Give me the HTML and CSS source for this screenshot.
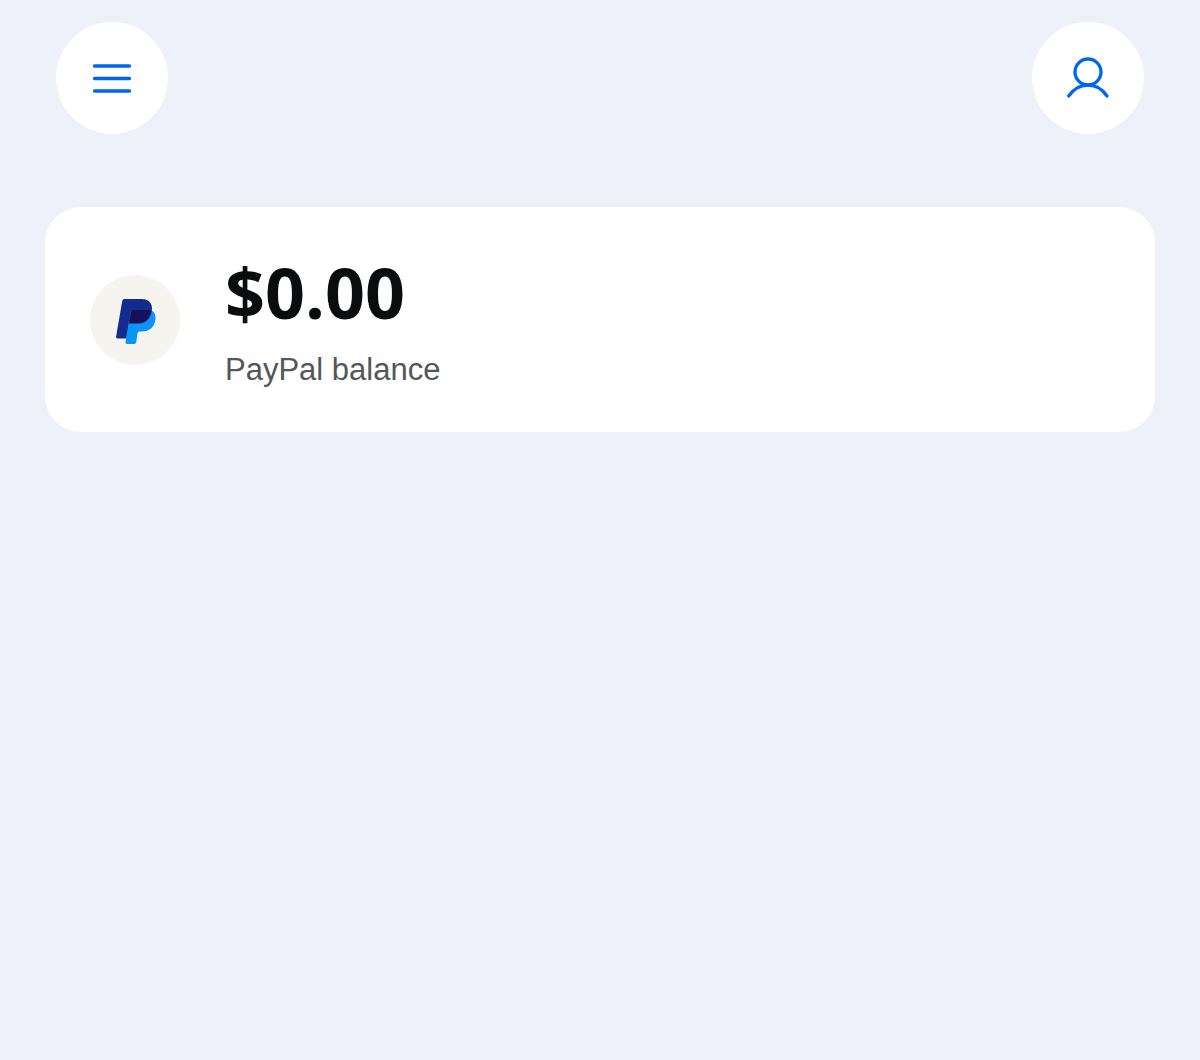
FILE: index.html
```html
<!DOCTYPE html>
<html lang="en">
<head>
  <meta charset="utf-8">
  <meta name="viewport" content="width=device-width, initial-scale=1">
  <title>PayPal balance</title>
  <link rel="stylesheet" href="styles.css">
</head>
<body>
  <header class="topbar">
    <button class="round-button" type="button" aria-label="Menu">
      <svg class="button-icon" viewBox="0 0 112 112" aria-hidden="true">
        <path d="M38.500 44H73.500M38.500 56.500H73.500M38.500 69H73.500"/>
      </svg>
    </button>
    <button class="round-button" type="button" aria-label="Profile">
      <svg class="button-icon" viewBox="0 0 112 112" aria-hidden="true">
        <circle cx="56" cy="50" r="13"/>
        <path d="M36.700 74C46.500 59.500 65.500 59.500 75 74"/>
      </svg>
    </button>
  </header>
  <main class="content">
    <section class="card">
      <svg class="logo" viewBox="0 0 90 90" role="img" aria-label="PayPal">
        <circle cx="45" cy="45" r="45" fill="#f6f4ef"/>
        <path fill="#122b8e" d="M34.500 24H52C58.500 24 62.500 28.500 62 34.500L50 47L38 63.500H27.500Q25.800 63.500 26.100 61.800L32.200 26Q32.500 24 34.500 24Z"/>
        <path fill="#0b94fb" d="M61.600 35.500C65 37.500 66 40.500 65.400 44.500C64.300 52.500 59.500 56.500 51.500 56.500H49.500Q47.800 56.500 47.500 58.200L46.200 67.300Q45.900 69 44.200 69H37Q35.300 69 35.500 67.300L38.700 47L50 40Z"/>
        <path fill="#11145c" stroke="#34408c" stroke-width=".6" d="M43 34.300H60Q61.800 34.300 61.600 36C60.500 43.500 56 48.500 48 48.500H38.800L41 36Q41.300 34.300 43 34.300Z"/>
      </svg>
      <div class="details">
        <p class="amount">$0.00</p>
        <p class="label">PayPal balance</p>
      </div>
    </section>
  </main>
</body>
</html>
```
FILE: styles.css
```css
* {
  box-sizing: border-box;
}

body {
  margin: 0;
  min-height: 100vh;
  background: #eef1f9;
  font-family: "Liberation Sans", Arial, sans-serif;
}

.topbar {
  display: flex;
  justify-content: space-between;
  padding: 22px 56px 0;
}

.round-button {
  width: 112px;
  height: 112px;
  padding: 0;
  border: 0;
  border-radius: 50%;
  background: #fff;
  cursor: pointer;
}

.button-icon {
  display: block;
  width: 100%;
  height: 100%;
  fill: none;
  stroke: #0066f0;
  stroke-width: 3.3;
  stroke-linecap: round;
}

.content {
  padding: 73px 45px;
}

.card {
  display: flex;
  align-items: center;
  gap: 45px;
  padding: 45px;
  border-radius: 36px;
  background: #fff;
}

.logo {
  flex: none;
  width: 90px;
  height: 90px;
}

.amount,
.label {
  margin: 0;
}

.amount {
  color: #0b0c0e;
  font-family: "Open Sans", sans-serif;
  font-size: 70px;
  font-weight: 700;
  line-height: 80px;
}

.label {
  margin-top: 20px;
  color: #545658;
  font-size: 31px;
  line-height: 35px;
}
```
